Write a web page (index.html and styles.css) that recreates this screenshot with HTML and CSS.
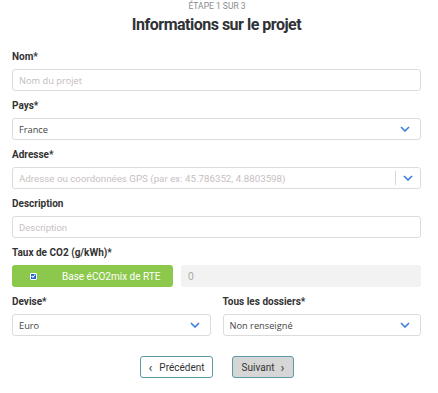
FILE: index.html
```html
<!DOCTYPE html>
<html lang="fr">
<head>
<meta charset="utf-8">
<link rel="stylesheet" href="styles.css">
</head>
<body>
<div class="page">
  <div class="step">ÉTAPE 1 SUR 3</div>
  <h1 class="title">Informations sur le projet</h1>

  <div class="field">
    <div class="label">Nom*</div>
    <div class="input"><span class="ph">Nom du projet</span></div>
  </div>

  <div class="field">
    <div class="label">Pays*</div>
    <div class="input select"><span class="val">France</span>
      <svg class="chev" width="10" height="6" viewBox="0 0 10 6"><path d="M1 1l4 4 4-4" fill="none" stroke="#3b7ddd" stroke-width="1.6"/></svg>
    </div>
  </div>

  <div class="field">
    <div class="label">Adresse*</div>
    <div class="input select rs"><span class="ph rsph">Adresse ou coordonnées GPS (par ex: 45.786352, 4.8803598)</span>
      <span class="sep"></span>
      <svg class="chev" width="10" height="6" viewBox="0 0 10 6"><path d="M1 1l4 4 4-4" fill="none" stroke="#3b7ddd" stroke-width="1.6"/></svg>
    </div>
  </div>

  <div class="field">
    <div class="label">Description</div>
    <div class="input"><span class="ph rsph dsc">Description</span></div>
  </div>

  <div class="field">
    <div class="label">Taux de CO2 (g/kWh)*</div>
    <div class="co2row">
      <div class="green"><span class="cb"><svg width="6" height="6" viewBox="0 0 6 6"><path d="M0.8 3l1.5 1.5L5.2 1.2" fill="none" stroke="#fff" stroke-width="1.3"/></svg></span><span class="gtext">Base éCO2mix de RTE</span></div>
      <div class="grayin">0</div>
    </div>
  </div>

  <div class="field two">
    <div class="col">
      <div class="label">Devise*</div>
      <div class="input select"><span class="val">Euro</span>
        <svg class="chev" width="10" height="6" viewBox="0 0 10 6"><path d="M1 1l4 4 4-4" fill="none" stroke="#3b7ddd" stroke-width="1.6"/></svg>
      </div>
    </div>
    <div class="col">
      <div class="label">Tous les dossiers*</div>
      <div class="input select"><span class="val">Non renseigné</span>
        <svg class="chev" width="10" height="6" viewBox="0 0 10 6"><path d="M1 1l4 4 4-4" fill="none" stroke="#3b7ddd" stroke-width="1.6"/></svg>
      </div>
    </div>
  </div>

  <div class="actions">
    <button class="btn prev"><span class="arr">‹</span>Précédent</button>
    <button class="btn next">Suivant<span class="arr r">›</span></button>
  </div>
</div>
</body>
</html>
```
FILE: styles.css
```css
* { box-sizing: border-box; }
body { margin: 0; background: #fff; font-family: Roboto, "Liberation Sans", sans-serif; color: #333; }
.page { padding: 0 17px 0 12px; width: 438px; }
.step { text-align: center; font-size: 8.5px; line-height: 12px; color: #8a8a8a; padding-left: 1px; }
.title { margin: 3px 0 0; text-align: center; font-size: 16px; line-height: 20px; font-weight: 700; color: #2f3236; letter-spacing: -0.5px; }
.field { margin-top: 8px; }
.title + .field { margin-top: 15px; }
.label { font-size: 10px; line-height: 14px; font-weight: 700; color: #333; margin-bottom: 5px; }
.input { height: 22px; border: 1px solid #dcdcdc; border-radius: 3px; display: flex; align-items: center; padding: 0 6px; font-family: "Open Sans", sans-serif; font-size: 9.25px; }
.ph { color: #c2bcbc; }
.rsph { font-family: Roboto, sans-serif; font-size: 9.75px; color: #c8bfbf; }
.dsc { font-size: 9.5px; }
.val { color: #444; }
.select { justify-content: space-between; }
.select .chev { margin-right: 4px; }
.rs .ph { flex: 1; white-space: nowrap; overflow: hidden; }
.rs .sep { width: 1px; height: 14px; background: #d6d6d6; margin: 0 7px 0 6px; }
.rs .chev { margin-right: 1px; }
.co2row { display: flex; gap: 8px; }
.green { width: 161px; height: 22px; background: #8cc84b; border-radius: 3px; display: flex; align-items: center; color: #fff; font-size: 10px; white-space: nowrap; }
.cb { width: 7px; height: 7px; background: #1a63d8; border: 1px solid #fff; border-radius: 1px; margin-left: 18px; display: flex; align-items: center; justify-content: center; }
.gtext { margin-left: 25px; }
.grayin { flex: 1; height: 22px; background: #f2f2f2; border-radius: 3px; display: flex; align-items: center; padding-left: 7px; color: #a0a0a0; font-size: 10px; font-family: "Open Sans", sans-serif; }
.two { display: flex; gap: 12px; }
.two .col { flex: 1; }
.actions { display: flex; justify-content: center; gap: 19px; margin-top: 20px; padding-left: 1px; }
.btn { height: 22px; border: 1px solid #5b9aa6; border-radius: 3px; font-family: Roboto, sans-serif; font-size: 10px; color: #333; display: flex; align-items: center; justify-content: center; padding: 0 6px; }
.prev { background: #fff; width: 73px; }
.next { background: #d6d6d6; width: 62px; }
.arr { font-size: 13px; margin-right: 7px; line-height: 1; }
.arr.r { margin-right: 0; margin-left: 6px; }
```
